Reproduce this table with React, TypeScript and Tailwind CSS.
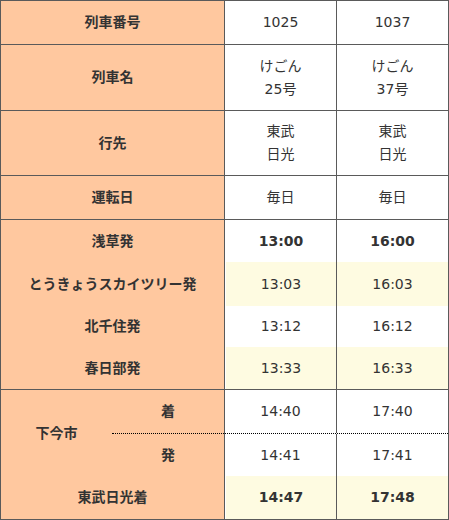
import React from "react";

const font = "font-['DejaVu_Sans','Noto_Sans_CJK_JP',sans-serif]";

const Head = ({ children, className = "" }: { children: React.ReactNode; className?: string }) => (
  <div className={`w-[224px] shrink-0 border-r border-[#5a5a5a] bg-[#ffc89f] flex items-center justify-center font-bold ${className}`}>{children}</div>
);

const Cell = ({ children, last = false, className = "" }: { children: React.ReactNode; last?: boolean; className?: string }) => (
  <div className={`${last ? "w-[111px]" : "w-[112px] border-r border-[#5a5a5a]"} shrink-0 flex flex-col items-center justify-center leading-[23px] ${className}`}>{children}</div>
);

const stops = [
  { name: "浅草発", a: "13:00", b: "16:00", bold: true, yellow: false, h: "h-[42px]" },
  { name: "とうきょうスカイツリー発", a: "13:03", b: "16:03", bold: false, yellow: true, h: "h-[44px]" },
  { name: "北千住発", a: "13:12", b: "16:12", bold: false, yellow: false, h: "h-[41px]" },
  { name: "春日部発", a: "13:33", b: "16:33", bold: false, yellow: true, h: "h-[42px]" },
];

export default function App() {
  return (
    <div className={`w-[449px] border border-[#5a5a5a] text-[14px] text-[#333] ${font}`}>
      {/* 列車情報 */}
      <div className="flex h-[44px] border-b border-[#5a5a5a]">
        <Head>列車番号</Head>
        <Cell>1025</Cell>
        <Cell last>1037</Cell>
      </div>
      <div className="flex h-[66px] border-b border-[#5a5a5a]">
        <Head>列車名</Head>
        <Cell>
          <span>けごん</span>
          <span>25号</span>
        </Cell>
        <Cell last>
          <span>けごん</span>
          <span>37号</span>
        </Cell>
      </div>
      <div className="flex h-[65px] border-b border-[#5a5a5a]">
        <Head>行先</Head>
        <Cell>
          <span>東武</span>
          <span>日光</span>
        </Cell>
        <Cell last>
          <span>東武</span>
          <span>日光</span>
        </Cell>
      </div>
      <div className="flex h-[44px] border-b border-[#5a5a5a]">
        <Head>運転日</Head>
        <Cell>毎日</Cell>
        <Cell last>毎日</Cell>
      </div>

      {/* 停車駅 */}
      <div className="flex flex-col border-b border-[#5a5a5a]">
        {stops.map((s) => (
          <div key={s.name} className={`flex ${s.h}`}>
            <Head>{s.name}</Head>
            <Cell className={`${s.bold ? "font-bold" : ""}`}>
              <div className={`w-full h-full flex items-center justify-center border-l border-white ${s.yellow ? "bg-[#fefbe1]" : ""}`}>{s.a}</div>
            </Cell>
            <Cell last className={`${s.bold ? "font-bold" : ""} ${s.yellow ? "bg-[#fefbe1]" : ""}`}>
              {s.b}
            </Cell>
          </div>
        ))}
      </div>

      <div className="flex">
        <div className="w-[224px] shrink-0 border-r border-[#5a5a5a] bg-[#ffc89f] font-bold flex flex-col">
          <div className="flex h-[86px]">
            <div className="w-[111px] flex items-center justify-center">下今市</div>
            <div className="flex-1 flex flex-col">
              <div className="h-[43px] flex items-center justify-center">着</div>
              <div className="h-[43px] flex items-center justify-center border-t border-dotted border-black">発</div>
            </div>
          </div>
          <div className="h-[43px] flex items-center justify-center">東武日光着</div>
        </div>
        <div className="flex-1 flex flex-col">
          <div className="flex h-[43px]">
            <Cell>14:40</Cell>
            <Cell last>17:40</Cell>
          </div>
          <div className="flex h-[43px] border-t border-dotted border-black">
            <Cell>14:41</Cell>
            <Cell last>17:41</Cell>
          </div>
          <div className="flex h-[43px] font-bold">
            <Cell>
              <div className="w-full h-full flex items-center justify-center border-l border-white bg-[#fefbe1]">14:47</div>
            </Cell>
            <Cell last className="bg-[#fefbe1]">
              17:48
            </Cell>
          </div>
        </div>
      </div>
    </div>
  );
}
